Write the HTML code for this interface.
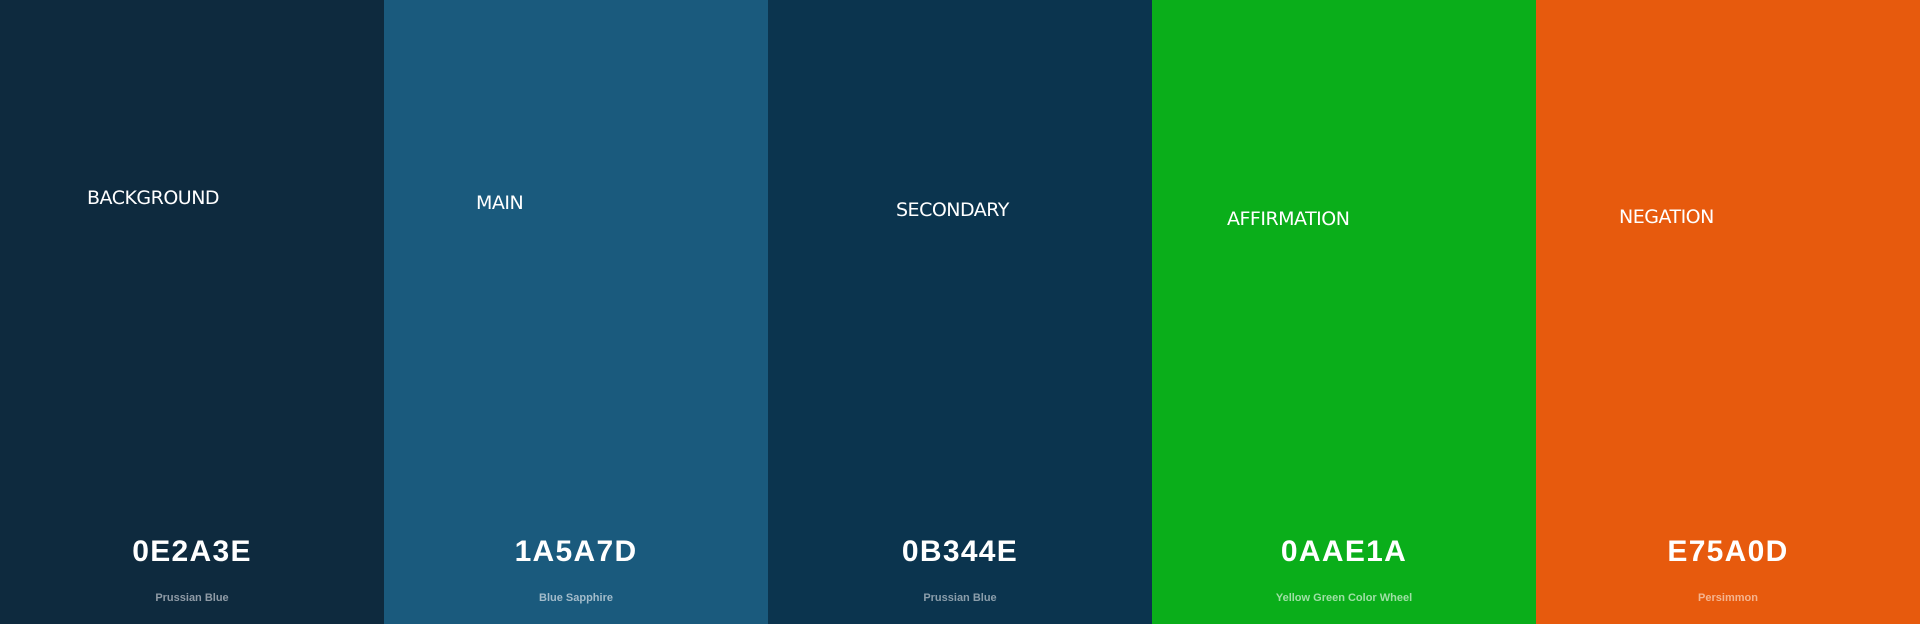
<!DOCTYPE html>
<html><head><meta charset="utf-8"><style>
html,body{margin:0;padding:0;width:1920px;height:624px;overflow:hidden}
.c{position:absolute;top:0;height:624px;width:384px}
.l{position:absolute;font-family:"DejaVu Sans","Liberation Sans",sans-serif;font-size:19px;color:#fff;white-space:nowrap;line-height:1;letter-spacing:-0.5px}
.h{position:absolute;left:0;width:384px;text-align:center;top:536px;font-family:"Liberation Sans",sans-serif;font-weight:bold;font-size:30px;color:#fff;letter-spacing:1.3px;line-height:32px}
.n{position:absolute;left:0;width:384px;text-align:center;top:592px;font-family:"Liberation Sans",sans-serif;font-weight:bold;font-size:11px;line-height:12px}
</style></head><body>
<div class="c" style="left:0;background:#0e2a3e"><div class="l" style="left:87px;top:189px">BACKGROUND</div><div class="h">0E2A3E</div><div class="n" style="color:#8f9ba6">Prussian Blue</div></div>
<div class="c" style="left:384px;background:#1a5a7d"><div class="l" style="left:92px;top:194px">MAIN</div><div class="h">1A5A7D</div><div class="n" style="color:#a3bccb">Blue Sapphire</div></div>
<div class="c" style="left:768px;background:#0b344e"><div class="l" style="left:128px;top:201px">SECONDARY</div><div class="h">0B344E</div><div class="n" style="color:#8b9eab">Prussian Blue</div></div>
<div class="c" style="left:1152px;background:#0aae1a"><div class="l" style="left:75px;top:210px">AFFIRMATION</div><div class="h">0AAE1A</div><div class="n" style="color:#9fe0a5">Yellow Green Color Wheel</div></div>
<div class="c" style="left:1536px;background:#e75a0d"><div class="l" style="left:83px;top:208px">NEGATION</div><div class="h">E75A0D</div><div class="n" style="color:#f5b48f">Persimmon</div></div>
</body></html>
